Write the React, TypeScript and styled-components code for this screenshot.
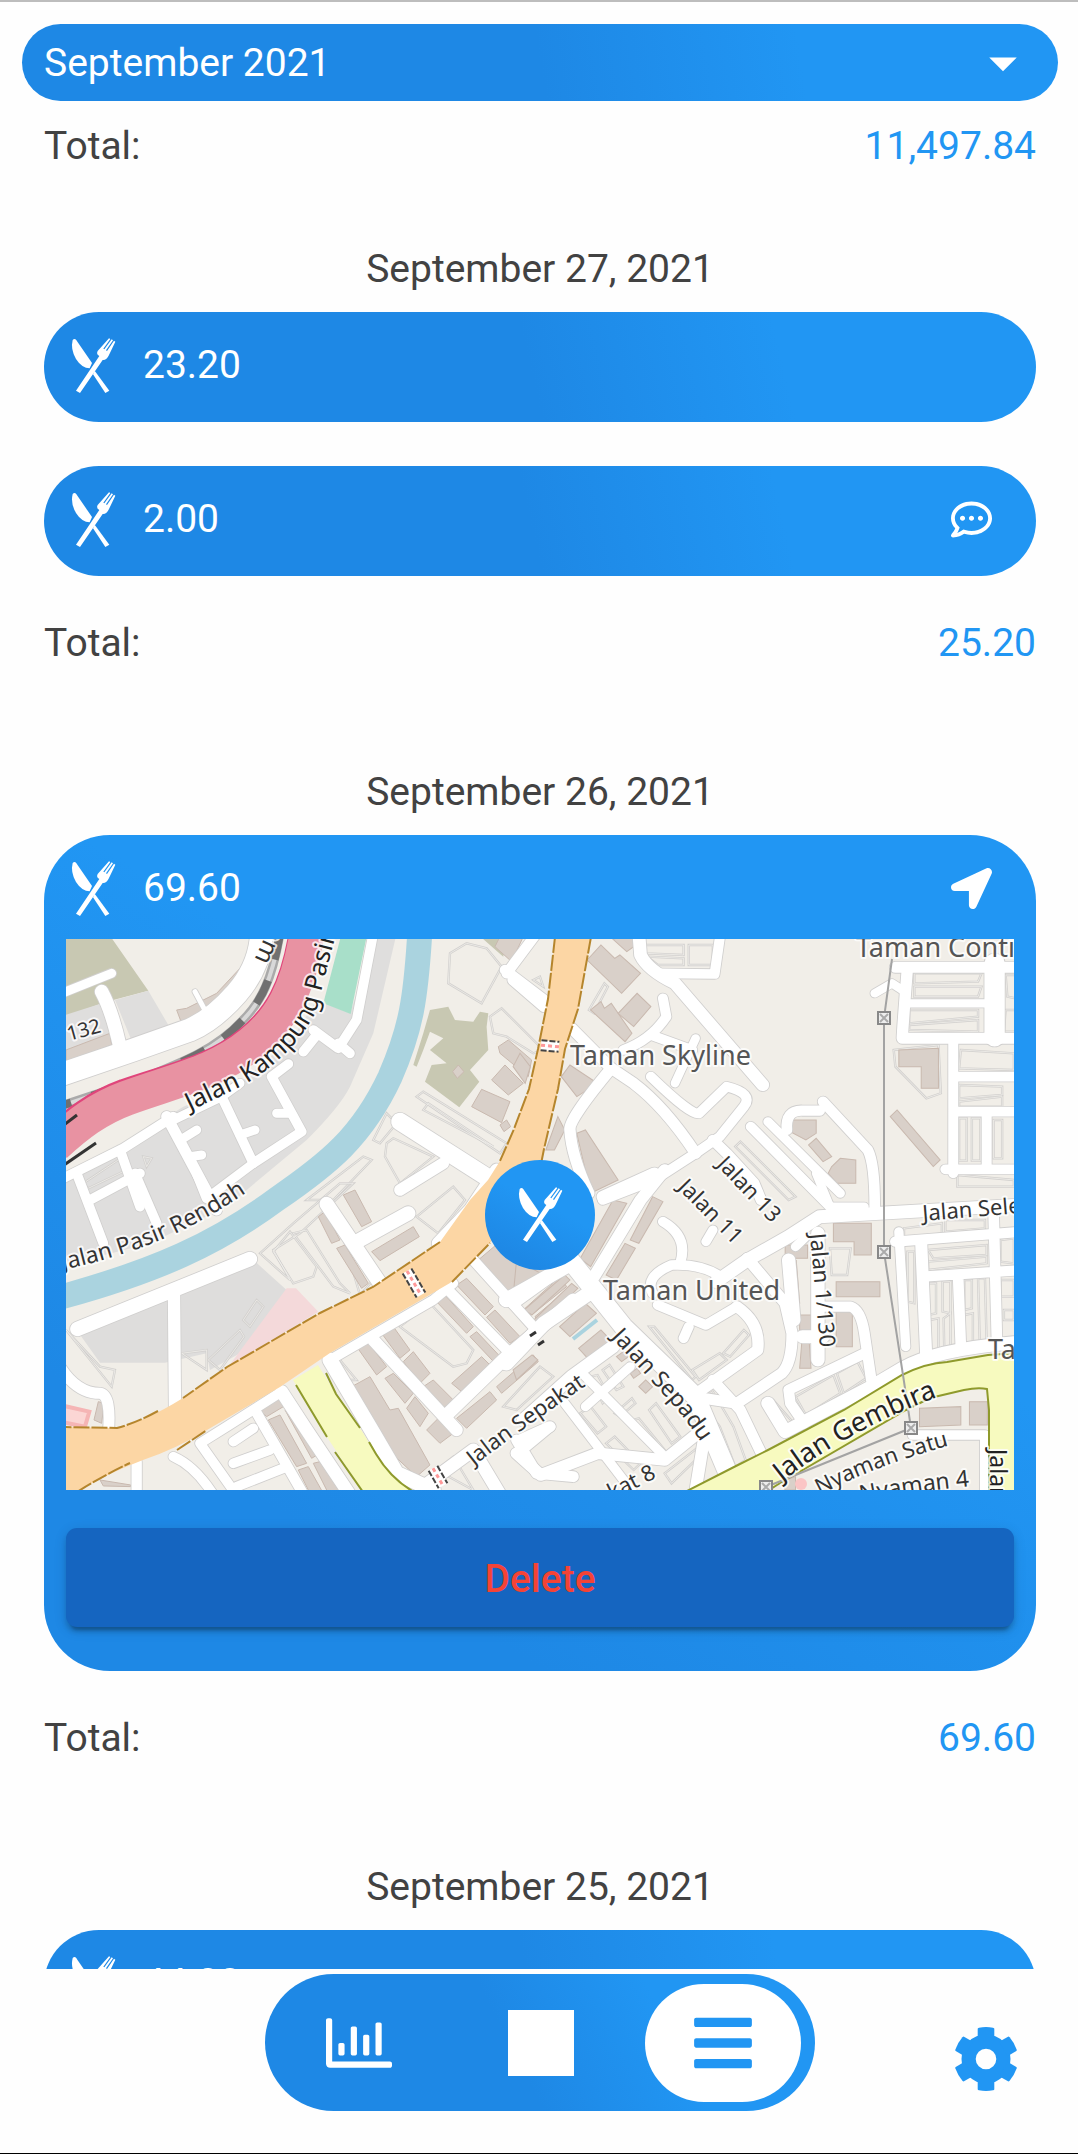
import React, { useState } from "react";
import styled, { createGlobalStyle, css } from "styled-components";
import { FaBars, FaLocationArrow, FaRegChartBar, FaRegCommentDots } from "react-icons/fa";
import { MdArrowDropDown } from "react-icons/md";

const color = {
  dark: "#1e88e5",
  light: "#2196f3",
  text: "#424242",
  button: "#1565c0",
  danger: "#f44336",
};

const GlobalStyle = createGlobalStyle`
  *, *::before, *::after { box-sizing: border-box; }
  body { margin: 0; background: #fefefe; }
  button, select { font: inherit; color: inherit; border: 0; background: none; margin: 0; padding: 0; cursor: pointer; }
`;

const Screen = styled.div`
  height: 100vh;
  display: grid;
  grid-template-rows: minmax(0, 1fr) auto;
  border-top: 2px solid #bdbdbd;
  border-bottom: 1px solid #000;
  background: #fefefe;
  color: ${color.text};
  font: 400 39px/52px Roboto, "Liberation Sans", sans-serif;
`;

const List = styled.main`
  overflow-y: auto;
  scrollbar-width: none;
  padding: 22px 20px 0 22px;
`;

const MonthPicker = styled.div`
  display: grid;
  height: 77px;
  border-radius: 39px;
  color: #fff;
  background: linear-gradient(81deg, ${color.dark} 50%, ${color.light} 75%);
  > * { grid-area: 1 / 1; }
  svg { justify-self: end; align-self: center; margin-right: 22px; pointer-events: none; }
`;

const MonthSelect = styled.select`
  appearance: none;
  width: 100%;
  padding: 0 88px 0 22px;
  border-radius: inherit;
  option { color: ${color.text}; }
`;

const Summary = styled.div`
  padding: 19px 22px 0;
`;

const Day = styled.section<{ $first?: boolean }>`
  padding: ${(p) => (p.$first ? 71 : 97)}px 22px 0;
`;

const DayTitle = styled.h2`
  margin: 0 0 17px;
  font: inherit;
  text-align: center;
`;

const Entries = styled.div`
  display: flex;
  flex-direction: column;
  gap: 44px;
  margin-bottom: 41px;
`;

const TotalLine = styled.div`
  display: flex;
  justify-content: space-between;
`;

const Amount = styled.span`
  color: ${color.light};
`;

const entryLayout = css`
  display: flex;
  align-items: center;
  width: 100%;
  color: #fff;
  text-align: left;
`;

const Entry = styled.button`
  ${entryLayout}
  height: 110px;
  padding: 0 44px 4px 22px;
  border-radius: 55px;
  background: linear-gradient(77deg, ${color.dark} 49%, ${color.light} 74%);
`;

const Card = styled.article`
  padding-bottom: 44px;
  border-radius: 66px;
  background: linear-gradient(31deg, ${color.dark} 21%, ${color.light} 60%);
`;

const CardHead = styled.button`
  ${entryLayout}
  height: 104px;
  padding: 2px 44px 0 22px;
`;

const Value = styled.span`
  flex: 1;
  margin-left: 22px;
`;

const IconSlot = styled.span`
  display: flex;
  width: 55px;
  height: 55px;
`;

const MapBox = styled.div`
  display: grid;
  place-items: center;
  margin: 0 22px 38px;
  > * { grid-area: 1 / 1; }
`;

const MapDrawing = styled.svg`
  display: block;
  width: 100%;
  height: 551px;
  font-family: "Noto Sans", sans-serif;
`;

const Marker = styled.div`
  display: grid;
  place-items: center;
  width: 110px;
  height: 110px;
  border-radius: 50%;
  color: #fff;
  background: linear-gradient(27deg, ${color.dark} 17%, ${color.light} 58%);
`;

const DeleteButton = styled.button`
  display: block;
  width: calc(100% - 44px);
  height: 99px;
  margin: 0 22px;
  padding-top: 2px;
  border-radius: 11px;
  color: ${color.danger};
  background: ${color.button};
  font-weight: 500;
  box-shadow: 0 8px 3px -5px rgba(0, 0, 0, 0.2), 0 5px 5px rgba(0, 0, 0, 0.14), 0 3px 13px rgba(0, 0, 0, 0.12);
`;

const Footer = styled.footer`
  display: grid;
  grid-template-columns: 1fr minmax(0, 550px) 1fr;
  height: 184px;
  padding: 5px 0 0 2px;
  align-items: start;
`;

const Tabs = styled.nav`
  grid-column: 2;
  display: flex;
  justify-content: space-between;
  align-items: center;
  height: 137px;
  padding: 0 14px 0 16px;
  border-radius: 69px;
  background: linear-gradient(63deg, ${color.dark} 45%, ${color.light} 72%);
`;

const Tab = styled.button<{ $active?: boolean }>`
  display: grid;
  place-items: center;
  width: 156px;
  height: 118px;
  border-radius: 59px;
  color: ${(p) => (p.$active ? color.light : "#fff")};
  background: ${(p) => (p.$active ? "#fff" : "transparent")};
`;

const Square = styled.span`
  width: 66px;
  height: 66px;
  background: #fff;
`;

const SettingsButton = styled.button`
  display: block;
  justify-self: end;
  margin: 53px 60px 0 0;
  width: 64px;
  height: 64px;
  color: ${color.light};
`;

function Cutlery() {
  return (
    <svg width="55" height="55" viewBox="78 111 165 165" fill="currentColor" aria-hidden="true">
      <path d="M98 117 Q104 111 109 118 L156 186 L149 202 Q126 202 108 174 Q91 145 98 117Z" />
      <path d="M164 209 L208 269 L196 276 L159 220Z" />
      <path d="M108 269 L178 165 Q168 160 173 150 L207 112 L211 114 L190 143 L193 145 L215 115 L219 118 L198 148 L201 150 L222 119 L226 122 L207 162 Q200 178 188 177 L120 276Z" />
    </svg>
  );
}

function Gear() {
  const teeth = [0, 60, 120, 180, 240, 300];
  return (
    <svg width="64" height="64" viewBox="-32 -32 64 64" fill="currentColor" aria-hidden="true">
      <path
        fillRule="evenodd"
        d="M-24.5 0A24.5 24.5 0 1 0 24.5 0A24.5 24.5 0 1 0 -24.5 0ZM-10.3 0A10.3 10.3 0 1 1 10.3 0A10.3 10.3 0 1 1 -10.3 0Z"
      />
      {teeth.map((a) => (
        <path key={a} transform={`rotate(${a})`} d="M-8.3 -20V-30.2Q-8.3 -31 -7 -31.3Q0 -32.6 7 -31.3Q8.3 -31 8.3 -30.2V-20Z" />
      ))}
    </svg>
  );
}

/* The map is kept in four survey sheets; each sheet has its own scale and origin. */
type Sheet = { at: string; roads: [number, string][]; blocks: string[]; plots: string[] };

const sheets: Sheet[] = [
  {
    at: "translate(-26 -119) scale(.3333)",
    roads: [
      [70, "M665 340Q660 440 590 520T450 630L280 690L60 765"],
      [28, "M60 522L215 460"],
      [42, "M185 515Q215 570 240 680"],
      [16, "M465 515L500 580"],
      [34, "M380 890L530 1170"],
      [30, "M545 830L640 1030L785 935L695 770L745 732"],
      [28, "M400 900L545 830L600 790"],
      [28, "M640 1030L520 1120"],
      [28, "M430 955L470 930M450 1010L485 1005M600 945L645 930M710 880L745 880"],
      [30, "M240 990L300 1160M60 1080L250 985L400 890"],
      [30, "M1000 340L950 600L895 685L820 630M830 645L790 695M895 670L930 700"],
      [32, "M1395 450L1520 545M1400 460L1490 340"],
      [54, "M1080 905L1370 1090"],
      [36, "M1080 1110L1210 1030"],
    ],
    blocks: [
      "410 570,440 565,530 520,600 445,612 450,575 510,500 580,425 610",
      "78 690,210 640,215 675,78 725",
      "1375 680,1405 660,1475 720,1465 770,1380 700",
      "1355 780,1395 735,1450 790,1405 825",
      "1295 860,1325 808,1410 845,1385 908",
      "1365 380,1385 340,1450 350,1415 425",
      "1238 755,1255 735,1272 755,1252 775",
      "1380 915,1400 900,1412 920,1392 935",
    ],
    plots: [
      "1230 400,1280 370,1340 385,1385 440,1325 550,1225 490",
      "1350 590,1385 565,1510 690,1480 700,1400 650,1360 640",
      "1130 830,1150 815,1400 970,1380 1000",
      "1150 870,1165 850,1360 980",
      "1000 960,1040 880,1070 910,1020 970",
      "1040 970,1060 955,1180 1010,1080 1090,1035 1010",
      "130 1090,250 1010,260 1050,145 1105",
      "800 1140,970 1010,995 1020,880 1140",
      "320 1040,310 1010,335 1015",
      "1480 480,1500 470,1510 500",
    ],
  },
  {
    at: "translate(454 -119) scale(.3444 .3333)",
    roads: [
      [38, "M345 340L350 405Q370 450 450 490L705 795"],
      [30, "M400 460L565 462L582 340"],
      [34, "M-20 480L70 560M150 625L260 740"],
      [34, "M265 745L330 790Q420 860 510 1000"],
      [34, "M265 745Q140 900 145 930Q150 1010 200 1120"],
      [30, "M300 690Q380 660 425 590L415 535M380 645L500 690"],
      [30, "M380 770Q500 890 520 880L600 800Q680 820 650 860L580 950L510 1000L390 1080L240 1140"],
      [26, "M450 790L510 655"],
      [30, "M670 920L900 1160"],
      [28, "M720 905L930 1120"],
      [32, "M775 930Q770 870 820 872L870 872M880 845L1010 990Q1030 1030 1030 1160"],
      [34, "M1090 442H1460M1125 442Q1110 640 1110 655H1460"],
      [26, "M1125 550H1370M1030 520L1080 490L1110 510"],
      [60, "M1378 430V650"],
      [30, "M1258 660V1060M1258 770H1460M1258 875H1460M1235 1048H1460M1355 880V1040"],
      [32, "M560 960L600 1000L680 1090L700 1140"],
    ],
    blocks: [
      "195 420,235 375,275 415,290 405,350 460,295 520",
      "205 570,235 545,245 565,265 550,325 640,305 665",
      "285 580,340 520,380 560,330 620",
      "120 770,145 735,225 790,165 830",
      "165 940,190 930,285 1080,205 1120",
      "790 900,860 900,860 940,830 960,785 935",
      "838 975,860 955,905 1010,880 1025",
      "905 1040,930 1015,975 1020,975 1090,920 1090,895 1060",
      "1100 690,1215 685,1215 805,1165 805,1165 740,1100 740",
      "1075 890,1095 870,1220 1020,1200 1040",
      "270 358,330 340,330 380,310 395",
      "110 890,130 930,100 990,75 990",
      "0 700,30 740,15 790,-20 740",
    ],
    plots: [
      "365 375,475 375,475 405,365 400",
      "490 375,560 375,560 435,490 435",
      "370 410,475 415,475 435,400 435",
      "1145 460,1340 460,1330 485,1145 490",
      "1145 500,1340 500,1330 530,1145 530",
      "1130 570,1330 570,1330 590,1130 610",
      "1130 615,1330 600,1330 635,1130 630",
      "1410 465,1440 465,1440 535,1415 530",
      "1410 570,1440 570,1440 635,1405 635",
      "1280 690,1434 700,1434 750,1275 745",
      "1275 795,1400 800,1400 825,1275 835",
      "1275 845,1400 830,1400 860,1275 860",
      "1275 895,1297 895,1297 1022,1275 1022",
      "1312 895,1337 895,1337 1022,1312 1022",
      "1375 900,1400 900,1400 1015,1375 1015",
      "1085 690,1215 675,1222 820,1180 835,1090 740",
      "1270 1065,1434 1080,1434 1100,1270 1100",
      "200 570,245 490,255 500,215 580",
      "625 980,640 965,800 1130,780 1140",
    ],
  },
  {
    at: "translate(-26 241) scale(.3333)",
    roads: [
      [44, "M112 447L630 237"],
      [38, "M402 340L405 690"],
      [34, "M60 560Q110 640 180 640Q215 645 205 760"],
      [30, "M110 -20L190 190M285 -20L350 130M150 60L300 -20M470 -20L500 55"],
      [44, "M860 72L1020 310M950 185L1105 100"],
      [40, "M1195 190L1290 90L1370 -30"],
      [30, "M870 540L1180 360L1240 310"],
      [38, "M1000 480L1250 750"],
      [46, "M870 540L1000 760L1070 880L1180 930"],
      [32, "M1210 315L1420 530M1300 240L1480 440"],
      [40, "M1225 700L1400 530L1600 360"],
      [36, "M1420 370L1600 240"],
      [40, "M725 635L800 750L940 960"],
      [30, "M725 635L560 740L480 790L600 960M400 830Q470 860 530 960"],
      [32, "M645 690L800 960M290 845V960"],
      [30, "M580 785L640 745M580 850L690 810M590 920L730 865"],
      [40, "M1150 920L1300 810L1390 960"],
      [34, "M1430 780L1490 880L1600 890M1440 780L1530 740"],
    ],
    blocks: [
      "910 45,945 30,995 125,965 140",
      "835 110,855 95,900 180,875 190",
      "890 205,915 195,985 310,965 325",
      "995 215,1120 140,1138 170,1020 242",
      "1025 460,1060 440,1110 510,1080 535",
      "950 500,985 488,1040 560,1010 585",
      "1090 545,1120 515,1170 580,1140 610",
      "1035 595,1060 580,1120 640,1095 670",
      "1150 620,1180 600,1240 660,1210 685",
      "1160 750,1195 715,1240 760,1200 790",
      "1100 685,1125 650,1165 700,1140 740",
      "1185 360,1215 345,1300 440,1280 460",
      "1290 470,1310 455,1395 545,1375 560",
      "1250 315,1280 295,1360 380,1335 405",
      "1340 412,1365 390,1440 470,1410 490",
      "1235 610,1325 530,1350 555,1265 635",
      "1370 620,1480 525,1495 545,1385 640",
      "1250 715,1350 635,1370 660,1280 745",
      "935 620,990 590,1050 690,1075 685,1170 855,1130 890,1055 820",
      "655 685,730 645,747 670,680 710",
      "685 720,720 705,800 850,770 860",
      "735 690,765 680,840 820,815 835",
      "775 870,805 860,850 940,810 940",
      "820 850,860 840,905 940,865 940",
      "1315 240,1380 185,1520 270,1420 360",
      "1450 390,1560 290,1580 320,1475 405",
      "1485 410,1580 330,1600 350,1500 430",
      "162 720,175 665,192 670,185 730",
      "180 900,272 915,272 920,190 918",
    ],
    plots: [
      "660 220,760 130,900 10,940 10,780 160,700 210,750 300",
      "700 215,750 155,830 260,820 290,760 310",
      "760 160,800 150,900 310,930 340,880 320",
      "900 140,1000 300,960 345",
      "1130 110,1240 20,1275 60,1195 160",
      "1080 440,1170 370,1300 510,1280 550,1240 560",
      "1390 680,1500 560,1540 590,1430 690",
      "900 540,950 600,930 600,895 560",
      "610 420,650 360,670 380,630 440",
      "505 540,600 450,612 470,540 570",
      "78 450,180 560,225 570,215 620",
      "425 520,500 510,500 570",
      "1190 870,1240 830,1300 930",
    ],
  },
  {
    at: "translate(454 241) scale(.3444 .3333)",
    roads: [
      [40, "M1460 75L870 110L780 170L660 240L570 305"],
      [30, "M590 295Q530 250 440 255Q360 290 385 340M400 375L540 435L630 380"],
      [30, "M490 440L475 475M415 125Q490 170 465 250"],
      [34, "M660 235L770 370L790 460Q790 550 760 580L630 670L500 650L690 510Q700 430 630 380"],
      [56, "M130 220L300 440L510 650L600 870"],
      [40, "M780 240L795 420M865 160V540M820 470H880"],
      [32, "M880 380H960Q990 390 1000 460L1020 600"],
      [32, "M1000 520L780 630L785 670L825 730M560 600L640 690L710 840"],
      [40, "M720 670L770 755L1020 620L1110 565Q1200 510 1434 488"],
      [28, "M1100 155L1120 500"],
      [36, "M1165 190L1180 540"],
      [32, "M1090 185L1460 155M1170 290L1460 270M1272 285L1280 500M1375 90L1385 490"],
      [36, "M420 -30L350 60L215 290M240 50L390 -20"],
      [44, "M-40 360L150 250M-40 550L70 430L200 340"],
      [40, "M270 500L150 590L10 720"],
      [28, "M190 590L420 830M130 670L330 940M190 680L320 560"],
      [36, "M-10 820L60 885L225 820L420 840L540 740L510 930"],
      [28, "M20 800L90 740"],
      [30, "M1140 765H1350V940"],
      [28, "M540 185L560 150M800 200L830 170"],
      [26, "M1000 80H900L860 -20"],
    ],
    blocks: [
      "270 60,310 70,205 260,175 235",
      "385 50,415 65,345 190,320 180",
      "305 190,335 205,280 300,250 285",
      "130 285,145 300,35 405,12 390",
      "150 310,168 325,60 435,40 420",
      "115 440,190 370,222 400,145 470",
      "170 505,235 450,272 490,205 545",
      "910 130,1020 130,1020 225,970 225,970 185,910 185",
      "770 195,835 195,835 235,770 235",
      "918 305,1045 305,1045 350,918 350",
      "918 395,965 395,965 500,918 500",
      "812 405,850 405,850 450,812 450",
      "818 490,840 490,845 565,812 565",
      "1160 685,1280 680,1280 735,1160 740",
      "1305 665,1357 665,1357 735,1305 735",
      "280 530,300 515,315 530,295 545",
      "320 580,340 565,350 580,330 595",
      "345 620,365 600,385 620,365 640",
      "-20 570,35 525,52 540,-10 600",
      "-10 240,60 280,20 330,-20 350",
      "802 240,812 370,800 370",
      "760 905,800 890,800 930,770 930",
    ],
    plots: [
      "900 205,960 205,950 285,905 285",
      "240 570,260 555,300 620,280 630",
      "205 590,225 585,260 650,240 670",
      "275 700,325 655,335 670,290 710",
      "175 700,205 680,250 740,225 760",
      "375 690,395 670,465 770,440 790",
      "250 790,275 770,350 850,330 870",
      "330 720,345 715,420 810,405 815",
      "500 570,580 520,600 540,520 600",
      "590 520,650 450,665 465,610 530",
      "375 440,390 440,510 590,500 600",
      "800 650,910 585,930 640,830 705",
      "920 580,980 545,1005 595,940 640",
      "520 660,560 635,620 740,655 840,625 860,580 740",
      "710 670,735 660,795 730,780 745",
      "1185 210,1355 195,1355 225,1200 235",
      "1185 245,1355 230,1355 250,1185 270",
      "1185 310,1208 310,1208 400,1185 405",
      "1227 305,1250 305,1250 400,1227 395",
      "1290 300,1312 300,1312 385,1290 390",
      "1330 295,1350 295,1355 490,1335 490",
      "1190 420,1215 415,1215 520,1192 520",
      "1230 415,1250 400,1250 510,1232 515",
      "1290 405,1315 400,1315 490,1290 495",
      "1125 215,1145 215,1145 370,1125 365",
      "1115 145,1225 130,1225 160,1115 175",
      "1235 120,1350 120,1350 145,1235 155",
      "1395 180,1434 175,1434 250,1395 245",
      "1395 300,1434 300,1434 350,1395 350",
      "1405 390,1434 390,1434 420,1405 420",
      "420 880,520 800,530 820,440 910",
    ],
  },
];

const orange =
  "M489 -2L482 60L472 110L463 150L448 190L434 222L422 241L404 261L374 303L307 348L254 374L161 428L117 459Q80 482 51 489L-2 488V553H11Q40 535 77 521Q110 510 141 491L214 448L264 414L384 344L424 304L460 260L475 225L478 210L492 150L499 110L512 70L525 -2Z";
const orangeEdge =
  "M489 -2L482 60L472 110L463 150L448 190L434 222M374 303L307 348L254 374L161 428L117 459M92 472Q70 484 51 489L-2 488M11 553Q40 535 64 524M111 511L141 491M386 343L424 304M475 225L478 210L492 150L499 110L512 70L525 -2";
const gembira =
  "M619 553L668 528L702 511L778 471L836 436Q860 424 881 423L922 416L950 414V553H923V471L921 450Q912 448 898 451L864 459L840 471L711 546L700 553Z";
const branch = "M227 441L252 426L270 455L294 489L310 515Q325 540 348 553H297L261 498Z";
const branchEdge = "M230 446L261 498M269 513L297 553M260 434L270 455L294 489M303 503L310 515Q325 540 348 553";

const paths: Record<string, string> = {
  kampung: "M124 172L174 148Q225 120 250 73L284 -60",
  pasir: "M-3 331Q60 317 106 296Q150 276 200 240",
  alam: "M208 -36Q196 20 165 52",
  seratus: "M3 102L50 89",
  tigabelas: "M650 226L730 310",
  sebelas: "M611 249L700 339",
  satu130: "M744 295Q749 350 757 440",
  sepadu: "M545 398L597 455Q620 478 654 532",
  sepakat: "M408 527Q460 486 560 420",
  gembira: "M716 543Q790 484 910 444",
  nyaman: "M754 556Q820 521 910 500",
  nyaman4: "M795 563Q860 550 940 544",
  kat8: "M546 561L620 524",
  selera: "M857 282L980 272",
  jala: "M924 510V600",
};

const curved: [string, string, number, string][] = [
  ["kampung", "Jalan Kampung Pasir", 25, "#222"],
  ["pasir", "Jalan Pasir Rendah", 23, "#333"],
  ["alam", "Alam", 25, "#333"],
  ["seratus", "132", 20, "#333"],
  ["tigabelas", "Jalan 13", 22, "#333"],
  ["sebelas", "Jalan 11", 22, "#333"],
  ["satu130", "Jalan 1/130", 22, "#333"],
  ["sepadu", "Jalan Sepadu", 23, "#333"],
  ["sepakat", "Jalan Sepakat", 22, "#333"],
  ["gembira", "Jalan Gembira", 27, "#222"],
  ["nyaman", "Nyaman Satu", 22, "#333"],
  ["nyaman4", "Nyaman 4", 23, "#333"],
  ["kat8", "kat 8", 22, "#333"],
  ["selera", "Jalan Selera", 22, "#333"],
  ["jala", "Jalan", 23, "#222"],
];

function Crossing({ x, y, turn, length }: { x: number; y: number; turn: number; length: number }) {
  return (
    <g transform={`translate(${x} ${y}) rotate(${turn})`}>
      <rect x={-length / 2} y="-5" width={length} height="10" fill="#fff" />
      <path d={`M${-length / 2} -5H${length / 2}M${-length / 2} 5H${length / 2}`} stroke="#444" strokeWidth="2" strokeDasharray="6 2" />
      <path d={`M${-length / 2} 0H${length / 2}`} stroke="#f99" strokeWidth="3" strokeDasharray="4 3" />
    </g>
  );
}

function StreetMap() {
  return (
    <MapDrawing viewBox="0 0 948 551" preserveAspectRatio="xMidYMid slice" role="img" aria-label="Map of Taman United">
      <rect width="948" height="551" fill="#f1eee8" />

      <g transform="translate(-26 -119) scale(.3333)">
        <path fill="#c8c8b2" d="M60 340H205L325 512L200 545L60 595Z" />
        <path fill="#dfdedd" d="M225 540L325 512L385 615L275 662ZM60 590L200 545L215 640L60 700Z" />
        <path fill="#dfdedd" d="M1010 340H1070L1000 640L930 800Q900 860 800 960L560 1160L330 1270L60 1340V1100L300 940L430 860L600 790L760 650L830 540L930 580Z" />
        <path fill="#a8dfc9" d="M905 340H982L932 582L850 550Z" />
        <path fill="#c8c8b2" d="M1170 570L1225 560L1245 600L1300 605L1320 575L1345 580L1340 620L1345 690L1290 750L1318 785L1258 862L1155 785L1175 735L1220 730L1170 690L1210 655L1170 635L1150 690L1130 740L1120 735L1150 640ZM1310 340H1400L1390 410Z" />
      </g>
      <g transform="translate(-26 241) scale(.3333)">
        <path fill="#dedddc" d="M110 450L640 240L740 330L600 520L510 570L500 520L375 548H180Z" />
        <path fill="#f4d9da" d="M565 560L740 325H768L835 395Z" />
        <path fill="#fbd6d4" stroke="#f5b5b5" strokeWidth="12" d="M60 675L148 695L135 740L60 725Z" />
      </g>
      <path d="M354 -10C350 60 345 90 324 138C296 198 262 225 211 260C150 305 90 332 -5 358" fill="none" stroke="#aad3df" strokeWidth="25" />

      {sheets.map((s) => (
        <g key={s.at} transform={s.at}>
          {s.plots.map((p) => (
            <polygon key={p} points={p} fill="none" stroke="#d2d0ce" strokeWidth="7" />
          ))}
          {s.plots.map((p) => (
            <polygon key={p} points={p} fill="none" stroke="#f6f4f0" strokeWidth="2" />
          ))}
          {s.blocks.map((p) => (
            <polygon key={p} points={p} fill="#d9d0c9" stroke="#c9b9af" strokeWidth="3" />
          ))}
        </g>
      ))}
      {sheets.map((s) => (
        <g key={s.at} transform={s.at} fill="none" stroke="#d0cfce" strokeLinecap="round" strokeLinejoin="round">
          {s.roads.map(([w, d]) => (
            <path key={d} d={d} strokeWidth={w + 4} />
          ))}
        </g>
      ))}
      {sheets.map((s) => (
        <g key={s.at} transform={s.at} fill="none" stroke="#fff" strokeLinecap="round" strokeLinejoin="round">
          {s.roads.map(([w, d]) => (
            <path key={d} d={d} strokeWidth={w - 1} />
          ))}
        </g>
      ))}

      <g fill="none">
        <path d="M214 -5C206 40 196 62 176 82C150 110 120 122 70 142L-5 167" stroke="#aaa" strokeWidth="9" />
        <path d="M214 -5C206 40 196 62 176 82C150 110 120 122 70 142L-5 167" stroke="#d8d8d8" strokeWidth="4" />
        <path d="M214 -5C206 40 196 62 176 82C150 110 120 122 70 142L-5 167" stroke="#707070" strokeWidth="8" strokeDasharray="26 22" />
        <path d="M240 -5C231 50 214 80 184 104C150 132 110 140 60 157C30 168 10 184 -12 204" stroke="#e0457b" strokeWidth="35" />
        <path d="M241 -5C232 51 215 81 185 105C151 133 111 141 61 159C31 170 11 186 -11 206" stroke="#e892a2" strokeWidth="35" />
        <path d="M-2 186L11 176M-2 226L30 204" stroke="#333" strokeWidth="3" />
      </g>

      <path d={gembira} fill="#f7fabf" stroke="#8f9a2c" strokeWidth="2" />
      <path d={orange} fill="#fcd6a4" />
      <path d={orangeEdge} fill="none" stroke="#b5852c" strokeWidth="2" strokeDasharray="16 2" />
      <path d={branch} fill="#f7fabf" />
      <path d={branchEdge} fill="none" stroke="#8f9a2c" strokeWidth="2" />
      <Crossing x={484} y={107} turn={5} length={18} />
      <Crossing x={348} y={344} turn={60} length={28} />
      <Crossing x={372} y={538} turn={60} length={20} />
      <path d="M464 397L470 393M472 406L478 402" stroke="#333" strokeWidth="3" />
      <path d="M507 400L531 381" stroke="#aad3df" strokeWidth="4" />
      <circle cx="735" cy="545" r="6" fill="#fbc5c5" />

      <g fill="none" stroke="#a3a3a3" strokeWidth="2">
        <path d="M826 20L818 79V313L837 436L845 489L700 548" />
        {[[818, 79], [818, 313], [845, 489], [700, 548]].map(([x, y]) => (
          <g key={y}>
            <rect x={x - 6} y={y - 6} width="12" height="12" fill="#eee" stroke="#888" />
            <path d={`M${x - 4} ${y - 4}L${x + 4} ${y + 4}M${x + 4} ${y - 4}L${x - 4} ${y + 4}`} stroke="#aaa" />
          </g>
        ))}
      </g>

      <defs>
        {Object.entries(paths).map(([id, d]) => (
          <path key={id} id={id} d={d} />
        ))}
      </defs>
      <g stroke="#fff" strokeOpacity="0.8" strokeWidth="4" strokeLinejoin="round" paintOrder="stroke">
        {curved.map(([id, label, size, fill]) => (
          <text key={id} fontSize={size} fill={fill}>
            <textPath href={`#${id}`}>{label}</textPath>
          </text>
        ))}
        <g fill="#555" fontSize="27">
          <text x="504" y="126">Taman Skyline</text>
          <text x="537" y="361">Taman United</text>
          <text x="790" y="18">Taman Continental</text>
          <text x="922" y="420">Taman</text>
        </g>
      </g>
    </MapDrawing>
  );
}

function Total({ children }: { children: string }) {
  return (
    <TotalLine>
      <span>Total:</span>
      <Amount>{children}</Amount>
    </TotalLine>
  );
}

function EntryContent({ value, icon }: { value: string; icon?: React.ReactNode }) {
  return (
    <>
      <IconSlot><Cutlery /></IconSlot>
      <Value>{value}</Value>
      {icon}
    </>
  );
}

export default function App() {
  const [month, setMonth] = useState("September 2021");
  return (
    <Screen>
      <GlobalStyle />
      <List>
        <MonthPicker>
          <MonthSelect aria-label="Month" value={month} onChange={(e) => setMonth(e.target.value)}>
            <option>September 2021</option>
          </MonthSelect>
          <MdArrowDropDown size={66} aria-hidden="true" />
        </MonthPicker>
        <Summary><Total>11,497.84</Total></Summary>

        <Day $first>
          <DayTitle>September 27, 2021</DayTitle>
          <Entries>
            <Entry><EntryContent value="23.20" /></Entry>
            <Entry><EntryContent value="2.00" icon={<FaRegCommentDots size={41} />} /></Entry>
          </Entries>
          <Total>25.20</Total>
        </Day>

        <Day>
          <DayTitle>September 26, 2021</DayTitle>
          <Entries>
            <Card>
              <CardHead><EntryContent value="69.60" icon={<FaLocationArrow size={41} />} /></CardHead>
              <MapBox>
                <StreetMap />
                <Marker><Cutlery /></Marker>
              </MapBox>
              <DeleteButton>Delete</DeleteButton>
            </Card>
          </Entries>
          <Total>69.60</Total>
        </Day>

        <Day>
          <DayTitle>September 25, 2021</DayTitle>
          <Entries>
            <Entry><EntryContent value="44.00" /></Entry>
          </Entries>
        </Day>
      </List>

      <Footer>
        <Tabs aria-label="Views">
          <Tab aria-label="Statistics"><FaRegChartBar size={66} /></Tab>
          <Tab aria-label="Add"><Square /></Tab>
          <Tab $active aria-label="List"><FaBars size={66} /></Tab>
        </Tabs>
        <SettingsButton aria-label="Settings"><Gear /></SettingsButton>
      </Footer>
    </Screen>
  );
}
